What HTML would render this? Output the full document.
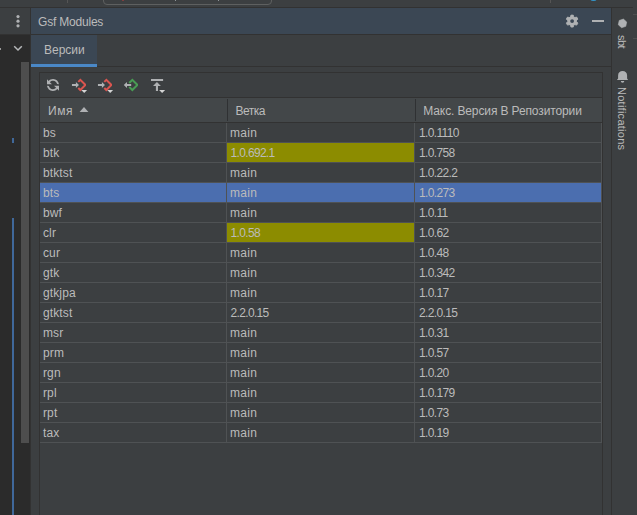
<!DOCTYPE html>
<html lang="ru"><head><meta charset="utf-8"><title>Gsf Modules</title>
<style>
html,body{margin:0;padding:0;}
body{width:637px;height:515px;overflow:hidden;background:#3c3f41;position:relative;font-family:"Liberation Sans",sans-serif;font-size:12px;color:#bbbbbb;}
.abs{position:absolute;}
.row{position:absolute;left:40px;width:561px;height:19px;border-bottom:1px solid #4f5254;}
.row.sel{background:#4b6eaf;}
.c{position:absolute;top:0;height:19px;line-height:21px;white-space:nowrap;box-sizing:border-box;padding-left:4px;}
.c1{left:0;width:186px;padding-left:3px;letter-spacing:0.12px;}
.c2{left:187px;width:187px;padding-left:3px;}
.c3{left:375px;width:186px;padding-left:4px;}
.yel{background:#8c8c00;}
.n{letter-spacing:-0.64px;}
.m{letter-spacing:0.3px;}
.c2 .n{margin-left:0.6px;letter-spacing:-0.68px;}
.vg{position:absolute;top:123px;height:320px;width:1px;background:#4f5254;}
.hd{position:absolute;top:99px;height:24px;line-height:24px;white-space:nowrap;}
.vt{position:absolute;white-space:nowrap;transform-origin:0 0;transform:rotate(90deg);font-size:11px;line-height:12px;}
</style></head><body>
<svg width="0" height="0" style="position:absolute"><defs><clipPath id="cr"><rect x="0" y="0" width="14.950" height="18"/></clipPath></defs></svg>
<!-- top strip -->
<div class="abs" style="left:0;top:7px;width:633px;height:1px;background:#323232"></div>
<div class="abs" style="left:67px;top:0;width:1px;height:3px;background:#555"></div>
<div class="abs" style="left:550px;top:0;width:1px;height:3px;background:#555"></div>
<div class="abs" style="left:103px;top:-6px;width:167px;height:9px;border:1px solid #5e6060;border-radius:4px;box-sizing:content-box"></div>
<div class="abs" style="left:590px;top:-5px;width:7px;height:6px;border-radius:3px;background:#3592c4"></div>
<div class="abs" style="left:122px;top:0;width:2px;height:1px;background:#7d3f3f"></div>
<div class="abs" style="left:175px;top:0;width:1px;height:1px;background:#8f9497"></div>
<div class="abs" style="left:218px;top:0;width:1px;height:1px;background:#8f9497"></div>
<!-- left editor strip -->
<div class="abs" style="left:0;top:35px;width:30px;height:480px;background:#2b2b2b"></div>
<div class="abs" style="left:30px;top:8px;width:1px;height:507px;background:#323232"></div>
<div class="abs" style="left:0;top:34px;width:611px;height:1px;background:#323232"></div>
<div class="abs" style="left:21px;top:62px;width:8px;height:381px;background:#4e4e4e"></div>
<div class="abs" style="left:12px;top:138px;width:2px;height:5px;background:#40689a"></div>
<div class="abs" style="left:12px;top:218px;width:2px;height:297px;background:#40689a"></div>
<div class="abs" style="left:0;top:48px;width:1px;height:2px;background:#9a9a9a"></div>
<svg class="abs" style="left:10px;top:41px" width="16" height="16" viewBox="0 0 16 16"><path d="M4.2 5.2 L8 9 L11.8 5.2" fill="none" stroke="#b6b8ba" stroke-width="1.5"/></svg>
<!-- kebab -->
<svg class="abs" style="left:10px;top:13px" width="16" height="16" viewBox="0 0 16 16"><g fill="#afb1b3"><circle cx="8" cy="3.6" r="1.6"/><circle cx="8" cy="8.2" r="1.6"/><circle cx="8" cy="12.8" r="1.6"/></g></svg>
<!-- header -->
<div class="abs" style="left:31px;top:8px;width:580px;height:26px;background:#3b4754"></div>
<div class="abs" style="left:38px;top:9px;height:26px;line-height:26px;letter-spacing:-0.2px">Gsf Modules</div>
<svg class="abs" style="left:564px;top:13px" width="16" height="16" viewBox="-8.100 -8.100 16 16"><g fill="#afb1b3" stroke="#afb1b3" stroke-width="0.800" stroke-linejoin="round"><circle r="4"/><path d="M-1.900 -3.500 L-1.150 -6 L1.150 -6 L1.900 -3.500Z" transform="rotate(0)"/><path d="M-1.900 -3.500 L-1.150 -6 L1.150 -6 L1.900 -3.500Z" transform="rotate(60)"/><path d="M-1.900 -3.500 L-1.150 -6 L1.150 -6 L1.900 -3.500Z" transform="rotate(120)"/><path d="M-1.900 -3.500 L-1.150 -6 L1.150 -6 L1.900 -3.500Z" transform="rotate(180)"/><path d="M-1.900 -3.500 L-1.150 -6 L1.150 -6 L1.900 -3.500Z" transform="rotate(240)"/><path d="M-1.900 -3.500 L-1.150 -6 L1.150 -6 L1.900 -3.500Z" transform="rotate(300)"/></g><circle r="1.900" fill="#3b4754"/></svg>
<div class="abs" style="left:592px;top:20px;width:12px;height:2px;background:#afb1b3"></div>
<!-- tab -->
<div class="abs" style="left:31px;top:35px;width:66px;height:32px;background:#3b4754"></div>
<div class="abs" style="left:31px;top:64px;width:66px;height:3px;background:#4a88c7"></div>
<div class="abs" style="left:97px;top:66px;width:514px;height:1px;background:#323232"></div>
<div class="abs" style="left:44px;top:36px;height:29px;line-height:29px">Версии</div>
<!-- right stripe -->
<div class="abs" style="left:611px;top:8px;width:1px;height:507px;background:#323232"></div>
<div class="abs" style="left:633px;top:14px;width:4px;height:1px;background:#4e4f4f"></div>
<div class="abs" style="left:633px;top:38px;width:4px;height:1px;background:#4e4f4f"></div>
<svg class="abs" style="left:616px;top:17px" width="13" height="13" viewBox="0 0 13 13"><polygon fill="#afb1b3" stroke="#afb1b3" stroke-width="0.600" stroke-linejoin="round" points="7.41,2.10 10.68,5.04 9.77,9.34 5.59,10.70 2.32,7.76 3.23,3.46"/></svg>
<div class="vt" style="left:628.200px;top:34.600px;letter-spacing:-0.500px">sbt</div>
<svg class="abs" style="left:615px;top:70px" width="15" height="14" viewBox="0 0 15 14"><path fill="#afb1b3" d="M3.100 8.600 V5.400 C3.100 2.600 5 0.900 7.600 0.900 C10.200 0.900 12.100 2.600 12.100 5.400 V8.600 L13.100 10 H1.900Z M5.800 11 H9.300 A1.750 1.750 0 0 1 5.800 11Z"/></svg>
<div class="vt" style="left:628.400px;top:87px;letter-spacing:0.260px">Notifications</div>
<!-- content box -->
<div class="abs" style="left:39px;top:72px;width:562px;height:460px;border:1px solid #323232"></div>
<div class="abs" style="left:40px;top:97px;width:562px;height:1px;background:#323232"></div>
<div class="abs" style="left:40px;top:98px;width:562px;height:24px;background:#434749"></div>
<div class="abs" style="left:40px;top:122px;width:562px;height:1px;background:#323232"></div>
<div class="abs" style="left:227px;top:99px;width:1px;height:22px;background:#2f3133"></div>
<div class="abs" style="left:415px;top:99px;width:1px;height:22px;background:#2f3133"></div>
<div class="hd" style="left:48px;letter-spacing:0.6px">Имя</div>
<div class="hd" style="left:235.400px;letter-spacing:-0.500px">Ветка</div>
<div class="hd" style="left:423.300px;letter-spacing:-0.120px">Макс. Версия В Репозитории</div>
<svg class="abs" style="left:79px;top:106px" width="10" height="7" viewBox="0 0 10 7"><path d="M0.600 6 L5 1 L9.400 6Z" fill="#afb1b3"/></svg>
<!-- toolbar icons -->
<svg class="abs" style="left:45px;top:77px" width="16" height="16" viewBox="0 0 16 16"><path fill="#afb1b3" fill-rule="evenodd" d="M12.5747152,11.8852806 C11.4741474,13.1817355 9.83247882,14.0044386 7.99865879,14.0044386 C5.03907292,14.0044386 2.57997332,11.8615894 2.08820756,9.0427473 L3.94774327,9.10768372 C4.43372186,10.8898575 6.06393114,12.2000519 8.00015362,12.2000519 C9.30149237,12.2000519 10.4645985,11.6082097 11.2349873,10.6790094 L9.05000019,8.71167959 L14.0431479,8.44999981 L14.3048222,13.4430431 L12.5747152,11.8852806 Z M3.42785637,4.11741586 C4.52839138,2.82452748 6.16775464,2.00443857 7.99865879,2.00443857 C10.918604,2.00443857 13.3513802,4.09026967 13.8882946,6.8532307 L12.0226389,6.78808057 C11.5024872,5.05935553 9.89838095,3.8000774 8.00015362,3.8000774 C6.69867367,3.8000774 5.53545628,4.39204806 4.76506921,5.32142241 L6.95482203,7.29304326 L1.96167436,7.55472304 L1.70000005,2.56167973 L3.42785637,4.11741586 Z" transform="rotate(3 8.002 8.004)"/></svg>
<svg class="abs" style="left:71px;top:77px" width="18" height="18" viewBox="0 0 18 18"><path d="M7.3 4.9 L9.35 2.85 L14.45 7.95 L9.35 13.05 L7.3 11" fill="none" stroke="#da554f" stroke-width="2" clip-path="url(#cr)"/><path d="M0.96 7 H4.9 V4.9 L8 7.95 L4.9 11 V9 H0.96Z" fill="#afb1b3"/><path d="M10.3 12.900 H16.1 L13.2 15.900Z" fill="#d4d4d4"/></svg>
<svg class="abs" style="left:97px;top:77px" width="18" height="18" viewBox="0 0 18 18"><path d="M7.3 4.9 L9.35 2.85 L14.45 7.95 L9.35 13.05 L7.3 11" fill="none" stroke="#da554f" stroke-width="2" clip-path="url(#cr)"/><path d="M0.96 7 H4.9 V4.9 L8 7.95 L4.9 11 V9 H0.96Z" fill="#afb1b3"/><path d="M10.3 12.900 H16.1 L13.2 15.900Z" fill="#d4d4d4"/></svg>
<svg class="abs" style="left:123px;top:77px" width="18" height="18" viewBox="0 0 18 18"><path d="M6.2 6 L9.35 2.85 L14.45 7.95 L9.35 13.05 L6.2 9.9" fill="none" stroke="#499c54" stroke-width="2" clip-path="url(#cr)"/><path d="M8.2 7 H4 V4.9 L0.8 7.95 L4 11 V9 H8.2Z" fill="#afb1b3" stroke="#3c3f41" stroke-width="0.600" paint-order="stroke"/></svg>
<svg class="abs" style="left:149px;top:77px" width="18" height="18" viewBox="0 0 18 18"><rect x="2" y="2" width="12.100" height="2" fill="#afb1b3"/><path d="M7.950 5.100 L11.900 8.900 H9 V13.900 H6.900 V8.900 H4Z" fill="#afb1b3"/><path d="M10.100 12.900 H16.100 L13.100 15.900Z" fill="#d4d4d4"/></svg>
<!-- rows -->
<div class="row" style="top:123px"><span class="c c1">bs</span><span class="c c2"><span class="m">main</span></span><span class="c c3"><span class="n">1.0.1110</span></span></div>
<div class="row" style="top:143px"><span class="c c1">btk</span><span class="c c2 yel"><span class="n">1.0.692.1</span></span><span class="c c3"><span class="n">1.0.758</span></span></div>
<div class="row" style="top:163px"><span class="c c1">btktst</span><span class="c c2"><span class="m">main</span></span><span class="c c3"><span class="n">1.0.22.2</span></span></div>
<div class="row sel" style="top:183px"><span class="c c1">bts</span><span class="c c2"><span class="m">main</span></span><span class="c c3"><span class="n">1.0.273</span></span></div>
<div class="row" style="top:203px"><span class="c c1">bwf</span><span class="c c2"><span class="m">main</span></span><span class="c c3"><span class="n">1.0.11</span></span></div>
<div class="row" style="top:223px"><span class="c c1">clr</span><span class="c c2 yel"><span class="n">1.0.58</span></span><span class="c c3"><span class="n">1.0.62</span></span></div>
<div class="row" style="top:243px"><span class="c c1">cur</span><span class="c c2"><span class="m">main</span></span><span class="c c3"><span class="n">1.0.48</span></span></div>
<div class="row" style="top:263px"><span class="c c1">gtk</span><span class="c c2"><span class="m">main</span></span><span class="c c3"><span class="n">1.0.342</span></span></div>
<div class="row" style="top:283px"><span class="c c1">gtkjpa</span><span class="c c2"><span class="m">main</span></span><span class="c c3"><span class="n">1.0.17</span></span></div>
<div class="row" style="top:303px"><span class="c c1">gtktst</span><span class="c c2"><span class="n">2.2.0.15</span></span><span class="c c3"><span class="n">2.2.0.15</span></span></div>
<div class="row" style="top:323px"><span class="c c1">msr</span><span class="c c2"><span class="m">main</span></span><span class="c c3"><span class="n">1.0.31</span></span></div>
<div class="row" style="top:343px"><span class="c c1">prm</span><span class="c c2"><span class="m">main</span></span><span class="c c3"><span class="n">1.0.57</span></span></div>
<div class="row" style="top:363px"><span class="c c1">rgn</span><span class="c c2"><span class="m">main</span></span><span class="c c3"><span class="n">1.0.20</span></span></div>
<div class="row" style="top:383px"><span class="c c1">rpl</span><span class="c c2"><span class="m">main</span></span><span class="c c3"><span class="n">1.0.179</span></span></div>
<div class="row" style="top:403px"><span class="c c1">rpt</span><span class="c c2"><span class="m">main</span></span><span class="c c3"><span class="n">1.0.73</span></span></div>
<div class="row" style="top:423px"><span class="c c1">tax</span><span class="c c2"><span class="m">main</span></span><span class="c c3"><span class="n">1.0.19</span></span></div>
<div class="vg" style="left:226px"></div>
<div class="vg" style="left:414px"></div>
<div class="vg" style="left:601px"></div>
</body></html>
